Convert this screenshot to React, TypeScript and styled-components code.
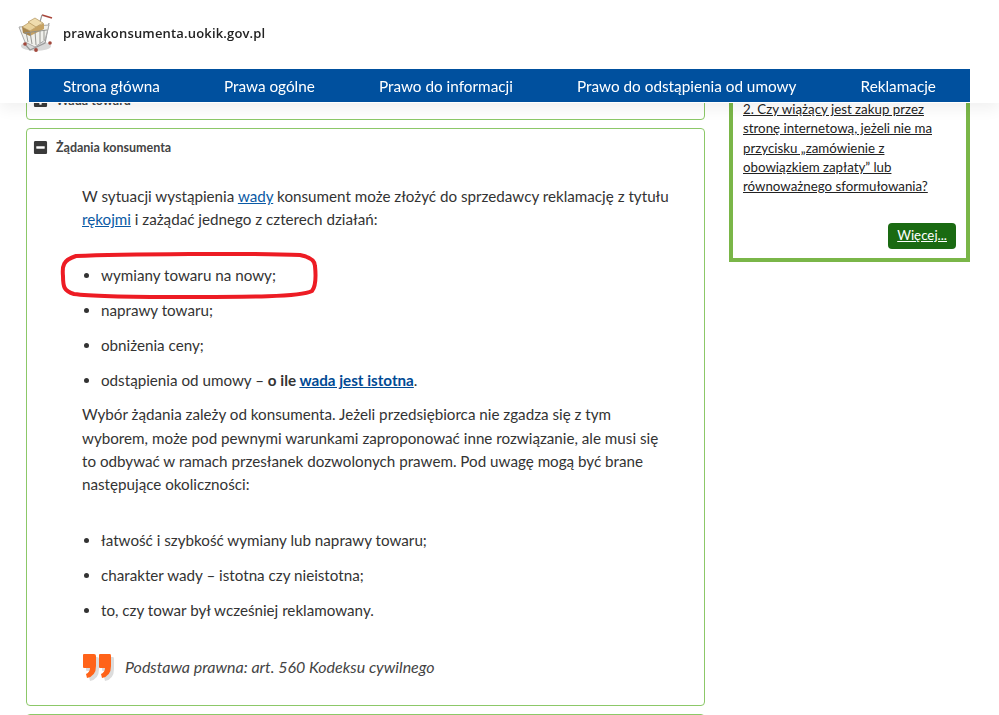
import styled, { createGlobalStyle } from 'styled-components';
import { FaMinusSquare, FaPlusSquare } from 'react-icons/fa';

const navItems = [
  'Strona główna',
  'Prawa ogólne',
  'Prawo do informacji',
  'Prawo do odstąpienia od umowy',
  'Reklamacje',
];

const CartLogo = () => (
  <svg width="40" height="40" viewBox="0 0 40 40">
    <ellipse cx="18" cy="33" rx="15" ry="5" fill="#d8d8d8" />
    <path d="M24 2 L34 5" stroke="#a8453a" strokeWidth="1.6" fill="none" />
    <path d="M24 2 L21 12 M31 10 L27 30 L12 37 L6 30" stroke="#999" strokeWidth="1.2" fill="none" />
    <path d="M1 14 L31 12 L27 27 L17 34 L7 29 Z" fill="#f0f0ec" stroke="#a9a9a9" />
    <path d="M4 14 L12 9 L20 13 L12 18 Z" fill="#e8d19c" stroke="#a5844c" strokeWidth="0.6" />
    <path d="M10 9 L17 5 L25 10 L18 14 Z" fill="#efdcae" stroke="#a5844c" strokeWidth="0.6" />
    <path d="M4 14 L12 18 L12 23 L5 20 Z" fill="#a8854c" />
    <path d="M12 18 L20 13 L18 14 L26 10 L26 16 L12 23 Z" fill="#c6a263" />
    <path d="M6 20 L29 17 M10 29 L8 19 M14 31 L12 19 M18 32 L17 18 M22 30 L22 18 M26 27 L26 17" stroke="#8f8f8a" strokeWidth="0.9" fill="none" />
    <circle cx="7" cy="31" r="1.8" fill="#a2483c" />
    <circle cx="18" cy="37" r="1.9" fill="#a2483c" />
    <circle cx="32" cy="30" r="1.8" fill="#a2483c" />
  </svg>
);

const QuoteMark = () => (
  <svg width="34" height="30" viewBox="0 0 34 30">
    <g fill="#dcdcdc" transform="translate(3 3)">
      <path d="M1 1 Q1 0 2 0 H12 Q14 0 14 2 V12 Q14 22 5 24 L4 20 Q8 18 8 14 H2 Q1 14 1 13 Z" />
      <path d="M17 1 Q17 0 18 0 H28 Q29 0 29 2 V12 Q29 22 20 24 L19 20 Q23 18 23 14 H18 Q17 14 17 13 Z" />
    </g>
    <g fill="#ff6319">
      <path d="M1 1 Q1 0 2 0 H12 Q14 0 14 2 V12 Q14 22 5 24 L4 20 Q8 18 8 14 H2 Q1 14 1 13 Z" />
      <path d="M17 1 Q17 0 18 0 H28 Q29 0 29 2 V12 Q29 22 20 24 L19 20 Q23 18 23 14 H18 Q17 14 17 13 Z" />
    </g>
  </svg>
);

const App = () => {
  return (
    <>
      <GlobalStyle />
      <Header>
        <Brand>
          <CartLogo />
          <BrandName>prawakonsumenta.uokik.gov.pl</BrandName>
        </Brand>
        <Nav>
          {navItems.map((item) => (
            <NavLink key={item}>{item}</NavLink>
          ))}
        </Nav>
      </Header>

      <Page>
        <Main>
          <CollapsedPanel>
            <PanelTitle>
              <FaPlusSquare />
              Wada towaru
            </PanelTitle>
          </CollapsedPanel>

          <Panel>
            <PanelTitle>
              <FaMinusSquare />
              Żądania konsumenta
            </PanelTitle>

            <PanelBody>
              <Lead>
                W sytuacji wystąpienia <TextLink>wady</TextLink> konsument może złożyć do sprzedawcy
                reklamację z tytułu <TextLink>rękojmi</TextLink> i zażądać jednego z czterech działań:
              </Lead>

              <List>
                <Item>
                  wymiany towaru na nowy;
                  <Marker viewBox="0 0 258 48" width="258" height="48" preserveAspectRatio="none">
                    <path
                      d="M16 4 C60 2 200 1 240 3 C250 5 255 8 255 14 C256 24 256 34 252 39 C240 45 190 45 120 45 C80 45 35 45 14 42 C4 39 3 35 3 24 C2 14 3 8 16 4 Z"
                      fill="none"
                      stroke="#ed1c24"
                      strokeWidth="4"
                    />
                  </Marker>
                </Item>
                <Item>naprawy towaru;</Item>
                <Item>obniżenia ceny;</Item>
                <Item>
                  odstąpienia od umowy – <strong>o ile <StrongLink>wada jest istotna</StrongLink></strong>.
                </Item>
              </List>

              <Paragraph>
                Wybór żądania zależy od konsumenta. Jeżeli przedsiębiorca nie zgadza się z tym
                wyborem, może pod pewnymi warunkami zaproponować inne rozwiązanie, ale musi się
                to odbywać w ramach przesłanek dozwolonych prawem. Pod uwagę mogą być brane
                następujące okoliczności:
              </Paragraph>

              <SecondList>
                <Item>łatwość i szybkość wymiany lub naprawy towaru;</Item>
                <Item>charakter wady – istotna czy nieistotna;</Item>
                <Item>to, czy towar był wcześniej reklamowany.</Item>
              </SecondList>

              <LegalBasis>
                <QuoteMark />
                <em>Podstawa prawna: art. 560 Kodeksu cywilnego</em>
              </LegalBasis>
            </PanelBody>
          </Panel>

          <NextPanel />
        </Main>

        <Aside>
          <Question>
            2. Czy wiążący jest zakup przez stronę internetową, jeżeli nie ma przycisku
            „zamówienie z obowiązkiem zapłaty” lub równoważnego sformułowania?
          </Question>
          <MoreButton>Więcej...</MoreButton>
        </Aside>
      </Page>
    </>
  );
};

const GlobalStyle = createGlobalStyle`
  html, body {
    margin: 0;
    height: 715px;
    overflow: hidden;
    background: #fff;
    font-family: Lato, "Liberation Sans", sans-serif;
    color: #333;
  }
`;

const Header = styled.header`
  position: fixed;
  top: 0;
  left: 0;
  right: 0;
  z-index: 2;
  height: 103px;
  background: #fff;
  box-shadow: 0 6px 14px rgba(0, 0, 0, 0.06);
`;

const Brand = styled.div`
  display: flex;
  align-items: flex-start;
  height: 69px;
  padding: 13px 0 0 18px;
  box-sizing: border-box;
`;

const BrandName = styled.span`
  margin-left: 5px;
  margin-top: 11px;
  font-family: "Open Sans", sans-serif;
  font-size: 13px;
  font-weight: 600;
  letter-spacing: 0.17px;
  color: #222;
`;

const Nav = styled.nav`
  display: flex;
  justify-content: space-between;
  align-items: center;
  box-sizing: border-box;
  height: 33px;
  margin: 0 29px;
  padding: 1px 34px 0;
  background: #00509e;
`;

const NavLink = styled.a`
  font-size: 15.3px;
  color: #fff;
`;

const Page = styled.div`
  display: flex;
  align-items: flex-start;
  gap: 24px;
  padding: 81px 29px 0 26px;
`;

const Main = styled.main`
  flex: 0 0 679px;
  display: flex;
  flex-direction: column;
  gap: 8px;
`;

const Panel = styled.section`
  border: 1px solid #8cc868;
  border-radius: 4px;
  background: #fff;
`;

const CollapsedPanel = styled(Panel)`
  height: 39px;
  box-sizing: border-box;
`;

const NextPanel = styled(Panel)`
  height: 30px;
  flex: none;
`;

const PanelTitle = styled.h3`
  display: flex;
  align-items: center;
  gap: 8px;
  height: 36px;
  margin: 0;
  padding-left: 6px;
  font-size: 12.5px;
  font-weight: 700;
  color: #444;

  svg {
    width: 15px;
    height: 15px;
    color: #3a3a3a;
  }
`;

const PanelBody = styled.div`
  padding: 20px 34px 21px 55px;
  font-size: 15.2px;
  line-height: 23.4px;
`;

const Lead = styled.p`
  margin: 0;
`;

const Paragraph = styled.p`
  margin: 11px 0 0;
`;

const TextLink = styled.a`
  color: #0b5aa5;
  text-decoration: underline;
`;

const StrongLink = styled(TextLink)`
  color: #004a94;
`;

const List = styled.ul`
  margin: 32px 0 0;
  padding: 0 0 0 19px;
`;

const SecondList = styled(List)`
  margin-top: 32px;
`;

const Item = styled.li`
  position: relative;
  margin-bottom: 11.6px;

  &:last-child {
    margin-bottom: 0;
  }
`;

const Marker = styled.svg`
  position: absolute;
  left: -41px;
  top: -12px;
`;

const LegalBasis = styled.p`
  display: flex;
  align-items: flex-start;
  gap: 9px;
  margin: 32px 0 0;
  color: #444;

  em {
    padding-top: 1px;
    font-size: 16px;
  }
`;

const Aside = styled.aside`
  flex: 0 0 241px;
  box-sizing: border-box;
  height: 181px;
  display: flex;
  flex-direction: column;
  align-items: flex-start;
  padding: 19px 10px 9px 10px;
  border: 4px solid #7ab648;
  border-top-width: 0;
  background: #fff;
`;

const Question = styled.a`
  font-size: 13.3px;
  line-height: 19.3px;
  color: #222;
  text-decoration: underline;
`;

const MoreButton = styled.a`
  align-self: flex-end;
  margin-top: auto;
  padding: 4px 9px 5px;
  border-radius: 4px;
  background: #1a6a12;
  color: #fff;
  font-size: 13.3px;
  line-height: 17px;
  text-decoration: underline;
`;

export default App;
